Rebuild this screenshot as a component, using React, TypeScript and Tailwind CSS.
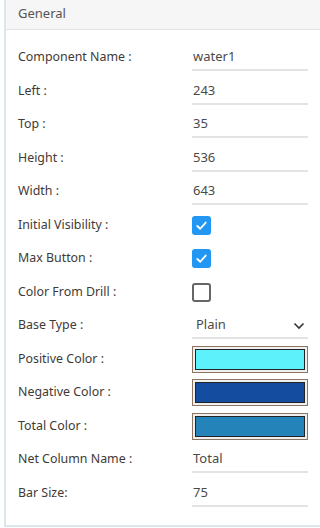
import React from "react";

const font = { fontFamily: '"Noto Sans", "Open Sans", sans-serif' };

function Label({ children }: { children: React.ReactNode }) {
  return <div className="w-[174px] shrink-0 text-[12.4px] text-[#3f3a36]">{children}</div>;
}

function InputRow({ label, value }: { label: string; value: string }) {
  return (
    <div className="h-[33.5px] flex items-center">
      <Label>{label}</Label>
      <div className="w-[116px] relative h-full flex items-center">
        <span className="pl-[1px] pb-[2px] text-[13px] text-[#4a4a4a]">{value}</span>
        <div className="absolute left-0 right-0 top-[28px] h-[2px] bg-[#e3e3e3]" />
      </div>
    </div>
  );
}

function CheckRow({ label, checked }: { label: string; checked: boolean }) {
  return (
    <div className="h-[33.5px] flex items-center">
      <Label>{label}</Label>
      {checked ? (
        <div className="w-[19px] h-[19px] rounded-[3px] bg-[#2196f3] flex items-center justify-center">
          <svg width="13" height="13" viewBox="0 0 14 14" fill="none">
            <path d="M2.5 7.5 L5.6 10.5 L11.5 3.8" stroke="white" strokeWidth="2" strokeLinecap="round" strokeLinejoin="round" />
          </svg>
        </div>
      ) : (
        <div className="w-[19px] h-[19px] rounded-[3px] border-2 border-[#666]" />
      )}
    </div>
  );
}

function ColorRow({ label, color }: { label: string; color: string }) {
  return (
    <div className="h-[33.5px] flex items-center">
      <Label>{label}</Label>
      <div className="w-[116px] h-[27px] border border-[#8c7662] bg-[#efefef] p-[2px]">
        <div className="w-full h-full border border-[#222]" style={{ backgroundColor: color }} />
      </div>
    </div>
  );
}

export default function App() {
  return (
    <div className="w-[320px] h-[528px] bg-white pl-[4px] overflow-hidden" style={font}>
      <div className="h-[527px] border-l-2 border-b-2 border-[#dce6ed] flex flex-col">
        <div className="h-[30px] shrink-0 bg-[#f6f6f6] border-b border-[#e4e4e4] flex items-center pl-[12px] pb-[2px] text-[13px] text-[#555]">
          General
        </div>
        <div className="pl-[12px] pt-[11px]">
          <InputRow label="Component Name :" value="water1" />
          <InputRow label="Left :" value="243" />
          <InputRow label="Top :" value="35" />
          <InputRow label="Height :" value="536" />
          <InputRow label="Width :" value="643" />
          <CheckRow label="Initial Visibility :" checked />
          <CheckRow label="Max Button :" checked />
          <CheckRow label="Color From Drill :" checked={false} />
          <div className="h-[33.5px] flex items-center">
            <Label>Base Type :</Label>
            <div className="w-[116px] relative h-full flex items-center justify-between">
              <span className="pl-[4px] pb-[2px] text-[13px] text-[#4a4a4a]">Plain</span>
              <svg width="12" height="8" viewBox="0 0 12 8" className="mr-[3px]">
                <path d="M1.5 1.5 L6 6 L10.5 1.5" stroke="#333" strokeWidth="1.6" fill="none" />
              </svg>
              <div className="absolute left-0 right-0 top-[28px] h-[2px] bg-[#e3e3e3]" />
            </div>
          </div>
          <ColorRow label="Positive Color :" color="#5cf1fb" />
          <ColorRow label="Negative Color :" color="#144ca0" />
          <ColorRow label="Total Color :" color="#2484b9" />
          <InputRow label="Net Column Name :" value="Total" />
          <InputRow label="Bar Size:" value="75" />
        </div>
      </div>
    </div>
  );
}
